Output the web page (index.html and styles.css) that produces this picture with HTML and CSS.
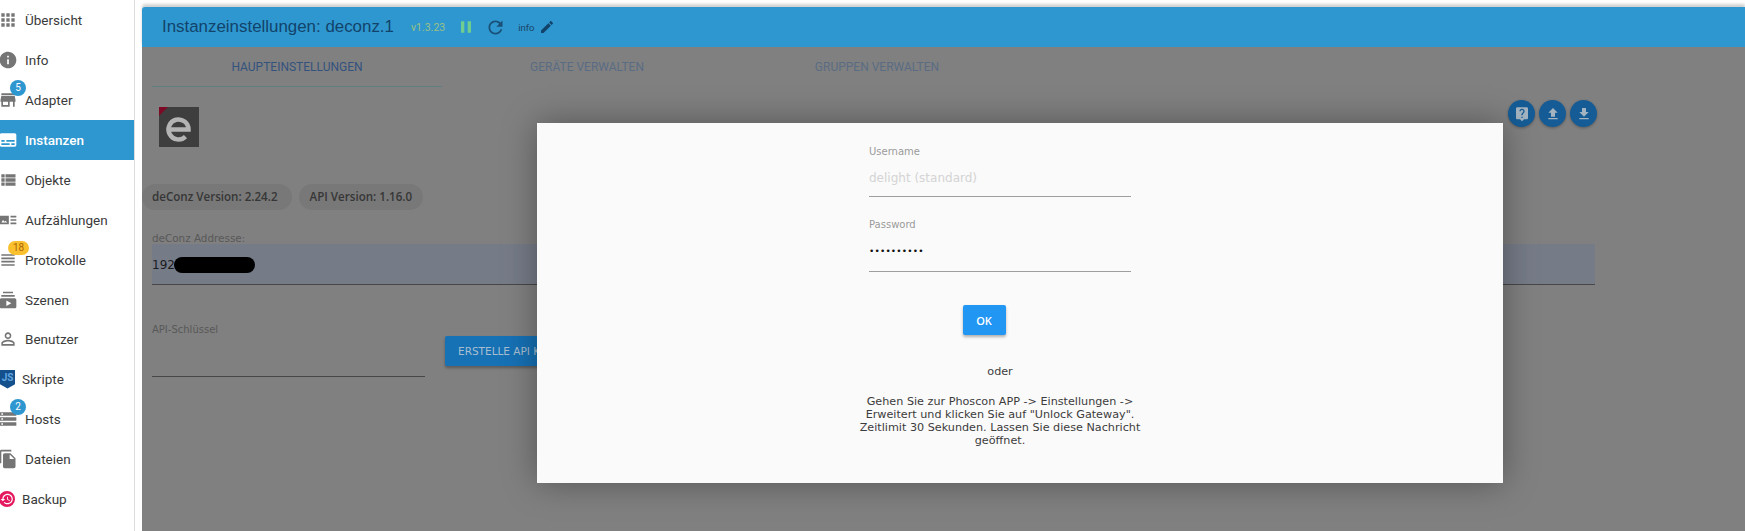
FILE: index.html
```html
<!DOCTYPE html>
<html lang="de">
<head>
    <meta charset="UTF-8">
    <meta name="viewport" content="width=device-width, initial-scale=1.0">
    <title>Instanzeinstellungen: deconz.1</title>
    <link rel="stylesheet" href="styles.css">
</head>
<body>
    <nav class="sidebar">
        <a class="nav-item"><svg viewBox="0 0 24 24"><path d="M4 8h4V4H4v4zm6 12h4v-4h-4v4zm-6 0h4v-4H4v4zm0-6h4v-4H4v4zm6 0h4v-4h-4v4zm6-10v4h4V4h-4zm-6 4h4V4h-4v4zm6 6h4v-4h-4v4zm0 6h4v-4h-4v4z"/></svg>Übersicht</a>
        <a class="nav-item"><svg viewBox="0 0 24 24"><path d="M12 2C6.48 2 2 6.48 2 12s4.48 10 10 10 10-4.48 10-10S17.52 2 12 2zm1 15h-2v-6h2v6zm0-8h-2V7h2v2z"/></svg>Info</a>
        <a class="nav-item"><svg viewBox="0 0 24 24"><path d="M20 4H4v2h16V4zm1 10v-2l-1-5H4l-1 5v2h1v6h10v-6h4v6h2v-6h1zm-9 4H6v-4h6v4z"/></svg>Adapter<span class="badge">5</span></a>
        <a class="nav-item active"><svg viewBox="0 0 24 24"><path d="M20 4H4c-1.1 0-2 .9-2 2v12c0 1.1.9 2 2 2h16c1.1 0 2-.9 2-2V6c0-1.1-.9-2-2-2zM4 12h4v2H4v-2zm10 6H4v-2h10v2zm6 0h-4v-2h4v2zm0-4H10v-2h10v2z"/></svg>Instanzen</a>
        <a class="nav-item"><svg viewBox="0 0 24 24"><path d="M4 14h4v-4H4v4zm0 5h4v-4H4v4zM4 9h4V5H4v4zm5 5h12v-4H9v4zm0 5h12v-4H9v4zM9 5v4h12V5H9z"/></svg>Objekte</a>
        <a class="nav-item"><svg viewBox="0 0 24 24"><path d="M2 7h11v10H2zM15 7h7v2h-7zM15 11h7v2h-7zM15 15h7v2h-7z"/><path class="cut" d="M4 15l2-3 2 2 1-1 2 2z"/></svg>Aufzählungen</a>
        <a class="nav-item"><svg viewBox="0 0 24 24"><path d="M4 15h16v-2H4zm0 4h16v-2H4zm0-8h16V9H4zm0-6v2h16V5z"/></svg>Protokolle<span class="badge badge-warn">18</span></a>
        <a class="nav-item"><svg viewBox="0 0 24 24"><path d="M20 8H4V6h16v2zm-2-6H6v2h12V2zm4 10v8c0 1.1-.9 2-2 2H4c-1.1 0-2-.9-2-2v-8c0-1.1.9-2 2-2h16c1.1 0 2 .9 2 2zm-6 4l-6-3.27v6.53L16 16z"/></svg>Szenen</a>
        <a class="nav-item nav-tight"><svg viewBox="0 0 24 24"><path d="M12 5.9c1.16 0 2.1.94 2.1 2.1s-.94 2.1-2.1 2.1S9.9 9.16 9.9 8s.94-2.1 2.1-2.1m0 9c2.97 0 6.1 1.46 6.1 2.1v1.1H5.9V17c0-.64 3.13-2.1 6.1-2.1M12 4C9.79 4 8 5.79 8 8s1.79 4 4 4 4-1.79 4-4-1.79-4-4-4zm0 9c-2.67 0-8 1.34-8 4v3h16v-3c0-2.66-5.33-4-8-4z"/></svg>Benutzer</a>
        <a class="nav-item"><span class="js-logo">JS</span>Skripte</a>
        <a class="nav-item"><svg viewBox="0 0 24 24"><path d="M2 20h20v-4H2v4zm2-3h2v2H4v-2zM2 4v4h20V4H2zm4 3H4V5h2v2zm-4 7h20v-4H2v4zm2-3h2v2H4v-2z"/></svg>Hosts<span class="badge">2</span></a>
        <a class="nav-item"><svg viewBox="0 0 24 24"><path d="M16 1H4c-1.1 0-2 .9-2 2v14h2V3h12V1zm-1 4l6 6v10c0 1.1-.9 2-2 2H7.99C6.89 23 6 22.1 6 21l.01-14c0-1.1.89-2 1.99-2h7zm-1 7h5.5L14 6.5V12z"/></svg>Dateien</a>
        <a class="nav-item"><span class="backup-logo"><svg viewBox="0 0 24 24"><path d="M13 3c-4.97 0-9 4.03-9 9H1l3.89 3.89.07.14L9 12H6c0-3.87 3.13-7 7-7s7 3.13 7 7-3.13 7-7 7c-1.93 0-3.68-.79-4.94-2.06l-1.42 1.42C8.27 19.99 10.51 21 13 21c4.97 0 9-4.03 9-9s-4.03-9-9-9zm-1 5v5l4.28 2.54.72-1.21-3.5-2.08V8H12z"/></svg></span>Backup</a>
    </nav>

    <main class="main">
        <header class="topbar">
            <h1>Instanzeinstellungen: deconz.1</h1>
            <span class="version">v1.3.23</span>
            <svg class="icon-pause" viewBox="0 0 24 24"><path d="M6 19h4V5H6v14zm8-14v14h4V5h-4z"/></svg>
            <svg class="icon-refresh" viewBox="0 0 24 24"><path d="M17.65 6.35C16.2 4.9 14.21 4 12 4c-4.42 0-7.99 3.58-7.99 8s3.57 8 7.99 8c3.73 0 6.84-2.55 7.73-6h-2.08c-.82 2.33-3.04 4-5.65 4-3.31 0-6-2.69-6-6s2.69-6 6-6c1.66 0 3.14.69 4.22 1.78L13 11h7V4l-2.35 2.35z"/></svg>
            <span class="loglevel">info</span>
            <svg class="icon-edit" viewBox="0 0 24 24"><path d="M3 17.25V21h3.75L17.81 9.94l-3.75-3.75L3 17.25zM20.71 7.04c.39-.39.39-1.02 0-1.41l-2.34-2.34c-.39-.39-1.02-.39-1.41 0l-1.83 1.83 3.75 3.75 1.83-1.83z"/></svg>
        </header>

        <section class="page">
            <div class="tabs">
                <div class="tab tab-active">Haupteinstellungen</div>
                <div class="tab">Geräte verwalten</div>
                <div class="tab">Gruppen verwalten</div>
            </div>

            <div class="logo-row">
                <svg class="logo" viewBox="0 0 40 40">
                    <rect width="40" height="40" fill="#3e3e3e"/>
                    <path d="M0 0h9L0 9z" fill="#7c0a26"/>
                    <path d="M10 22.5H29.5A10 10 0 1 0 26.5 29.6" fill="none" stroke="#b4b4b4" stroke-width="4.5"/>
                </svg>
                <div class="round-btns">
                    <span class="round-btn"><svg viewBox="0 0 24 24"><path d="M19 2H5c-1.11 0-2 .9-2 2v14c0 1.1.89 2 2 2h4l3 3 3-3h4c1.1 0 2-.9 2-2V4c0-1.1-.9-2-2-2zm-6 16h-2v-2h2v2zm2.07-7.75l-.9.92C13.45 11.9 13 12.5 13 14h-2v-.5c0-1.1.45-2.1 1.17-2.83l1.24-1.26c.37-.36.59-.86.59-1.41 0-1.1-.9-2-2-2s-2 .9-2 2H8c0-2.21 1.79-4 4-4s4 1.79 4 4c0 .88-.36 1.68-.93 2.25z"/></svg></span>
                    <span class="round-btn"><svg viewBox="0 0 24 24"><path d="M9 16h6v-6h4l-7-7-7 7h4v6zm-4 2h14v2H5v-2z"/></svg></span>
                    <span class="round-btn"><svg viewBox="0 0 24 24"><path d="M19 9h-4V3H9v6H5l7 7 7-7zM5 18v2h14v-2H5z"/></svg></span>
                </div>
            </div>

            <div class="chips">
                <span class="chip">deConz Version: 2.24.2</span>
                <span class="chip">API Version: 1.16.0</span>
            </div>

            <label class="field-label">deConz Addresse:</label>
            <div class="address"><span>192</span><span class="redacted"></span></div>

            <div class="api-row">
                <div class="api-field">
                    <label class="field-label">API-Schlüssel</label>
                </div>
                <button class="api-btn">Erstelle API Key</button>
            </div>

            <div class="modal">
                <div class="form-field">
                    <label>Username</label>
                    <div class="form-value placeholder">delight (standard)</div>
                </div>
                <div class="form-field">
                    <label>Password</label>
                    <div class="form-value dots">••••••••••</div>
                </div>
                <button class="ok-btn">OK</button>
                <p class="modal-or">oder</p>
                <p class="modal-note">Gehen Sie zur Phoscon APP -&gt; Einstellungen -&gt; Erweitert und klicken Sie auf "Unlock Gateway". Zeitlimit 30 Sekunden. Lassen Sie diese Nachricht geöffnet.</p>
            </div>
        </section>
    </main>
</body>
</html>
```

FILE: styles.css
```css
* {
    box-sizing: border-box;
}
html, body {
    height: 100%;
}
body {
    margin: 0;
    display: flex;
    overflow: hidden;
    background: #fff;
    font-family: Roboto, sans-serif;
}

/* sidebar */
.sidebar {
    width: 135px;
    flex: none;
    overflow: hidden;
    border-right: 1px solid #dcdcdc;
}
.nav-item {
    position: relative;
    display: flex;
    align-items: center;
    gap: 7px;
    height: 40px;
    font-size: 13.5px;
    color: #3a3a3a;
}
.nav-tight {
    margin-top: -1px;
}
.nav-item > svg {
    width: 20px;
    height: 20px;
    margin-left: -2px;
    fill: #757575;
    flex: none;
}
.nav-item .cut {
    fill: #fff;
}
.nav-item.active {
    background: #2e97cf;
    color: #fff;
    font-weight: 500;
}
.nav-item.active > svg {
    fill: #fff;
}
.js-logo {
    width: 15px;
    height: 19px;
    flex: none;
    background: #14508c;
    color: #62a6e0;
    font-size: 10px;
    font-weight: 700;
    line-height: 16px;
    text-align: center;
    clip-path: polygon(0 0, 100% 0, 100% 78%, 50% 100%, 0 78%);
}
.backup-logo {
    width: 16px;
    height: 16px;
    flex: none;
    margin-left: -1px;
    border-radius: 50%;
    background: #e5195f;
    display: flex;
}
.backup-logo svg {
    width: 14px;
    height: 14px;
    margin: 1px;
    fill: #fff;
}
.badge {
    position: absolute;
    left: 10px;
    top: 0;
    width: 16px;
    height: 16px;
    border-radius: 50%;
    background: #2e97cf;
    color: #fff;
    font-size: 10px;
    line-height: 16px;
    text-align: center;
}
.badge-warn {
    left: 8px;
    width: 21px;
    height: 14px;
    border-radius: 7px;
    top: 1px;
    line-height: 14px;
    background: #fbc02d;
    color: #a9660a;
}

/* main column */
.main {
    flex: 1;
    min-width: 0;
    display: flex;
    flex-direction: column;
    padding: 7px 0 0 7px;
}
.topbar {
    height: 40px;
    flex: none;
    display: flex;
    align-items: center;
    padding-left: 20px;
    background: #2e97cf;
    border-radius: 3px 0 0 0;
    box-shadow: 0 -3px 3px rgba(0, 0, 0, 0.18);
    color: #12436b;
}
.topbar h1 {
    margin: 0;
    font-family: "Liberation Sans", sans-serif;
    font-size: 16.9px;
    font-weight: 400;
}
.version {
    margin-left: 17px;
    font-size: 10.5px;
    color: #9cc084;
}
.icon-pause {
    width: 20px;
    height: 20px;
    margin-left: 11px;
    fill: #6fce8f;
}
.icon-refresh {
    width: 21px;
    height: 21px;
    margin-left: 9px;
    fill: #1a5078;
}
.loglevel {
    margin-left: 12px;
    font-size: 9.5px;
    color: #1a4466;
}
.icon-edit {
    width: 16px;
    height: 16px;
    margin-left: 5px;
    fill: #12436b;
}

/* dimmed page behind the dialog */
.page {
    position: relative;
    flex: 1;
    padding: 0 150px 0 10px;
    background: #808080;
}
.tabs {
    display: flex;
    height: 40px;
}
.tab {
    width: 290px;
    height: 40px;
    padding-top: 1px;
    line-height: 39px;
    text-align: center;
    font-size: 12px;
    text-transform: uppercase;
    color: #5a6c84;
}
.tab-active {
    color: #34527f;
    border-bottom: 1px solid #5f7f80;
}
.logo-row {
    display: flex;
    justify-content: space-between;
    align-items: flex-start;
    height: 97px;
    padding-top: 20px;
}
.logo {
    width: 40px;
    height: 40px;
    margin-left: 7px;
}
.round-btns {
    display: flex;
    gap: 4px;
    margin-right: -2px;
    margin-top: -7px;
}
.round-btn {
    width: 27px;
    height: 27px;
    border-radius: 50%;
    background: #155c96;
    box-shadow: 0 1px 3px rgba(0, 0, 0, 0.3);
    display: flex;
    align-items: center;
    justify-content: center;
}
.round-btn svg {
    width: 16px;
    height: 16px;
    fill: #a3b3c0;
}
.chips {
    display: flex;
    gap: 7px;
    height: 26px;
    margin-left: -10px;
}
.chip {
    height: 26px;
    padding: 0 11px;
    border-radius: 13px;
    background: #787878;
    color: #363636;
    font-family: "Open Sans", sans-serif;
    font-size: 11.6px;
    font-weight: 600;
    line-height: 26px;
}
.chip:first-child {
    padding: 0 14px 0 10px;
}
.field-label {
    display: block;
    font-family: "DejaVu Sans", sans-serif;
    font-size: 10.4px;
    line-height: 14px;
    color: #585858;
}
.api-field .field-label {
    font-size: 10px;
}
.chips + .field-label {
    margin-top: 21px;
}
.address {
    display: flex;
    align-items: center;
    height: 41px;
    margin-top: -1px;
    padding-top: 2px;
    background: #767b88;
    border-bottom: 1px solid #474747;
    font-family: "DejaVu Sans", sans-serif;
    font-size: 12px;
    color: #1c1c1c;
}
.redacted {
    width: 81px;
    height: 16px;
    margin-left: -1px;
    border-radius: 8px;
    background: #000;
}
.api-row {
    display: flex;
    align-items: flex-start;
    margin-top: 38px;
}
.api-field {
    width: 273px;
    height: 54px;
    border-bottom: 1px solid #474747;
}
.api-btn {
    width: 160px;
    height: 30px;
    margin-top: 13px;
    margin-left: 20px;
    padding: 0 13px;
    border: none;
    border-radius: 2px;
    background: #1671b5;
    color: #a9bfd0;
    font-family: "DejaVu Sans", sans-serif;
    font-size: 10.5px;
    text-align: left;
    text-transform: uppercase;
    white-space: nowrap;
    box-shadow: 0 2px 3px rgba(0, 0, 0, 0.3);
}

/* dialog */
.modal {
    position: absolute;
    left: 395px;
    top: 76px;
    width: 966px;
    height: 360px;
    padding: 22px 40px 0 0;
    display: flex;
    flex-direction: column;
    align-items: center;
    background: #fafafa;
    box-shadow: 0 0 32px rgba(0, 0, 0, 0.35);
    font-family: "DejaVu Sans", sans-serif;
}
.form-field {
    width: 262px;
    height: 52px;
    border-bottom: 1px solid #9e9e9e;
}
.form-field + .form-field {
    height: 75px;
    padding-top: 21px;
}
.form-field label {
    display: block;
    font-size: 10px;
    line-height: 14px;
    color: #9b9b9b;
}
.form-value {
    margin-top: 10px;
    font-size: 12px;
    line-height: 18px;
}
.placeholder {
    color: #d4d4d4;
}
.dots {
    color: #111;
    font-size: 9px;
    letter-spacing: 0.15px;
}
.ok-btn {
    width: 43px;
    height: 30px;
    margin: 33px 32px 0 0;
    border: none;
    border-radius: 2px;
    background: #2196f3;
    color: #fff;
    font-family: "Open Sans", sans-serif;
    font-size: 11px;
    font-weight: 600;
    box-shadow: 0 2px 3px rgba(0, 0, 0, 0.3);
}
.modal-or {
    margin: 30px 0 0;
    font-size: 11.2px;
    line-height: 13px;
    color: #3c3c3c;
}
.modal-note {
    width: 290px;
    margin: 17px 0 0;
    font-size: 11.2px;
    line-height: 13px;
    text-align: center;
    color: #3c3c3c;
}
```
